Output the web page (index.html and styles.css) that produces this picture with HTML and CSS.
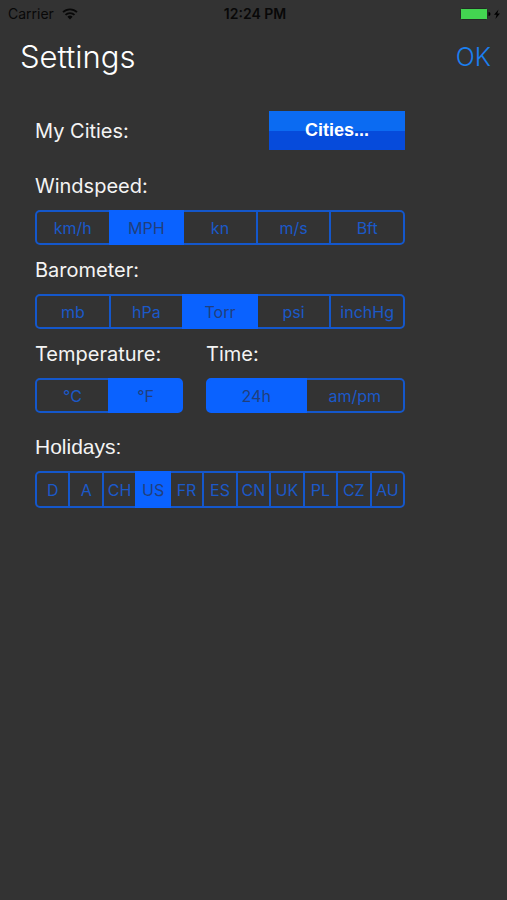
FILE: index.html
```html
<!DOCTYPE html>
<html lang="en">
<head>
<meta charset="utf-8">
<meta name="viewport" content="width=device-width, initial-scale=1">
<title>Settings</title>
<link rel="stylesheet" href="styles.css">
</head>
<body>
<div class="status">
  <div class="status-left">
    <span>Carrier</span>
    <svg class="wifi" viewBox="0 0 16 12" aria-hidden="true">
      <path d="M1 4.2a10 10 0 0 1 14 0M3.5 6.9a6.4 6.4 0 0 1 9 0" fill="none" stroke="currentColor" stroke-width="1.8"/>
      <path d="M5.4 8.8a3.8 3.8 0 0 1 5.2 0L8 11.5z" fill="currentColor"/>
    </svg>
  </div>
  <span class="clock">12:24 PM</span>
  <div class="status-right">
    <svg class="battery" viewBox="0 0 42 12" aria-hidden="true">
      <rect x="0.5" y="0.5" width="27" height="11" rx="1" fill="#43d551" stroke="#242b25"/>
      <path d="M28.5 4a2 2 0 0 1 0 4z" fill="#000"/>
      <path d="M38.5 1.5 34 6.8h2.6L35.4 11 40 5.6h-2.7z" fill="#000"/>
    </svg>
  </div>
</div>
<header class="header">
  <h1>Settings</h1>
  <button class="ok" type="button">OK</button>
</header>
<form class="settings">
  <div class="cities-row">
    <label class="title" for="cities">My Cities:</label>
    <button class="cities" id="cities" type="button">Cities...</button>
  </div>
  <fieldset class="group">
    <legend class="title">Windspeed:</legend>
    <div class="segments">
      <label><input type="radio" name="wind"><span>km/h</span></label>
      <label><input type="radio" name="wind" checked><span>MPH</span></label>
      <label><input type="radio" name="wind"><span>kn</span></label>
      <label><input type="radio" name="wind"><span>m/s</span></label>
      <label><input type="radio" name="wind"><span>Bft</span></label>
    </div>
  </fieldset>
  <fieldset class="group">
    <legend class="title">Barometer:</legend>
    <div class="segments">
      <label><input type="radio" name="baro"><span>mb</span></label>
      <label><input type="radio" name="baro"><span>hPa</span></label>
      <label><input type="radio" name="baro" checked><span>Torr</span></label>
      <label><input type="radio" name="baro"><span>psi</span></label>
      <label><input type="radio" name="baro"><span>inchHg</span></label>
    </div>
  </fieldset>
  <div class="pair">
    <fieldset class="group">
      <legend class="title">Temperature:</legend>
      <div class="segments">
        <label><input type="radio" name="temp"><span>°C</span></label>
        <label><input type="radio" name="temp" checked><span>°F</span></label>
      </div>
    </fieldset>
    <fieldset class="group">
      <legend class="title">Time:</legend>
      <div class="segments">
        <label><input type="radio" name="time" checked><span>24h</span></label>
        <label><input type="radio" name="time"><span>am/pm</span></label>
      </div>
    </fieldset>
  </div>
  <fieldset class="group holidays">
    <legend class="title">Holidays:</legend>
    <div class="segments">
      <label><input type="radio" name="holidays"><span>D</span></label>
      <label><input type="radio" name="holidays"><span>A</span></label>
      <label><input type="radio" name="holidays"><span>CH</span></label>
      <label><input type="radio" name="holidays" checked><span>US</span></label>
      <label><input type="radio" name="holidays"><span>FR</span></label>
      <label><input type="radio" name="holidays"><span>ES</span></label>
      <label><input type="radio" name="holidays"><span>CN</span></label>
      <label><input type="radio" name="holidays"><span>UK</span></label>
      <label><input type="radio" name="holidays"><span>PL</span></label>
      <label><input type="radio" name="holidays"><span>CZ</span></label>
      <label><input type="radio" name="holidays"><span>AU</span></label>
    </div>
  </fieldset>
</form>
</body>
</html>
```
FILE: styles.css
```css
* {
  box-sizing: border-box;
}

body {
  margin: 0;
  min-height: 100vh;
  background: #333;
  color: #f4f4f4;
  font-family: Inter, "Liberation Sans", sans-serif;
}

button {
  border: 0;
  padding: 0;
  cursor: pointer;
}

.status {
  display: grid;
  grid-template-columns: 1fr auto 1fr;
  align-items: center;
  height: 27px;
  padding: 0 5px 0 8px;
  color: #080808;
  font-size: 14px;
}

.status-left {
  display: flex;
  align-items: center;
  gap: 8px;
}

.wifi {
  width: 16px;
  height: 12px;
}

.clock {
  font-weight: 600;
}

.status-right {
  display: flex;
  justify-content: flex-end;
}

.battery {
  width: 42px;
  height: 12px;
}

.header {
  display: flex;
  justify-content: space-between;
  align-items: center;
  height: 59px;
  padding: 0 16px 0 20px;
}

h1 {
  margin: 0;
  color: #fff;
  font-size: 31px;
  font-weight: 300;
}

.ok {
  background: none;
  color: #1b7ff0;
  font: 300 25px Inter, sans-serif;
}

.settings {
  padding: 25px 102px 0 35px;
}

.cities-row {
  display: flex;
  justify-content: space-between;
  align-items: center;
  margin-bottom: 24px;
}

.title {
  padding: 0;
  font-size: 20px;
  line-height: 24px;
}

.cities {
  width: 136px;
  height: 39px;
  background: linear-gradient(#0b6bf2 50%, #064bdb 50%);
  color: #fff;
  font: bold 18px "Liberation Sans", sans-serif;
}

.group {
  min-width: 0;
  margin: 0 0 13px;
  border: 0;
  padding: 0;
}

.segments {
  display: flex;
  height: 35px;
  margin-top: 12px;
  color: #1b59c8;
  font-size: 16px;
}

.segments label {
  position: relative;
  display: grid;
  flex: 1 1 0;
  min-width: 0;
  border: 2px solid #1457cb;
  cursor: pointer;
}

.segments label + label {
  margin-left: -2px;
}

.segments label:first-child {
  border-radius: 5px 0 0 5px;
}

.segments label:last-child {
  border-radius: 0 5px 5px 0;
}

.segments input {
  position: absolute;
  inset: 0;
  margin: 0;
  opacity: 0;
}

.segments span {
  display: grid;
  place-items: center;
}

.segments label:has(:checked) {
  z-index: 1;
  border-color: #0a62ff;
  background: #0a62ff;
  color: #213f7c;
}

.pair {
  display: grid;
  grid-template-columns: 148fr 199fr;
  gap: 23px;
}

.holidays {
  margin-top: 9px;
}

.holidays .title {
  font-family: "Liberation Sans", sans-serif;
  font-size: 21px;
}

.holidays .segments {
  height: 37px;
}
```
